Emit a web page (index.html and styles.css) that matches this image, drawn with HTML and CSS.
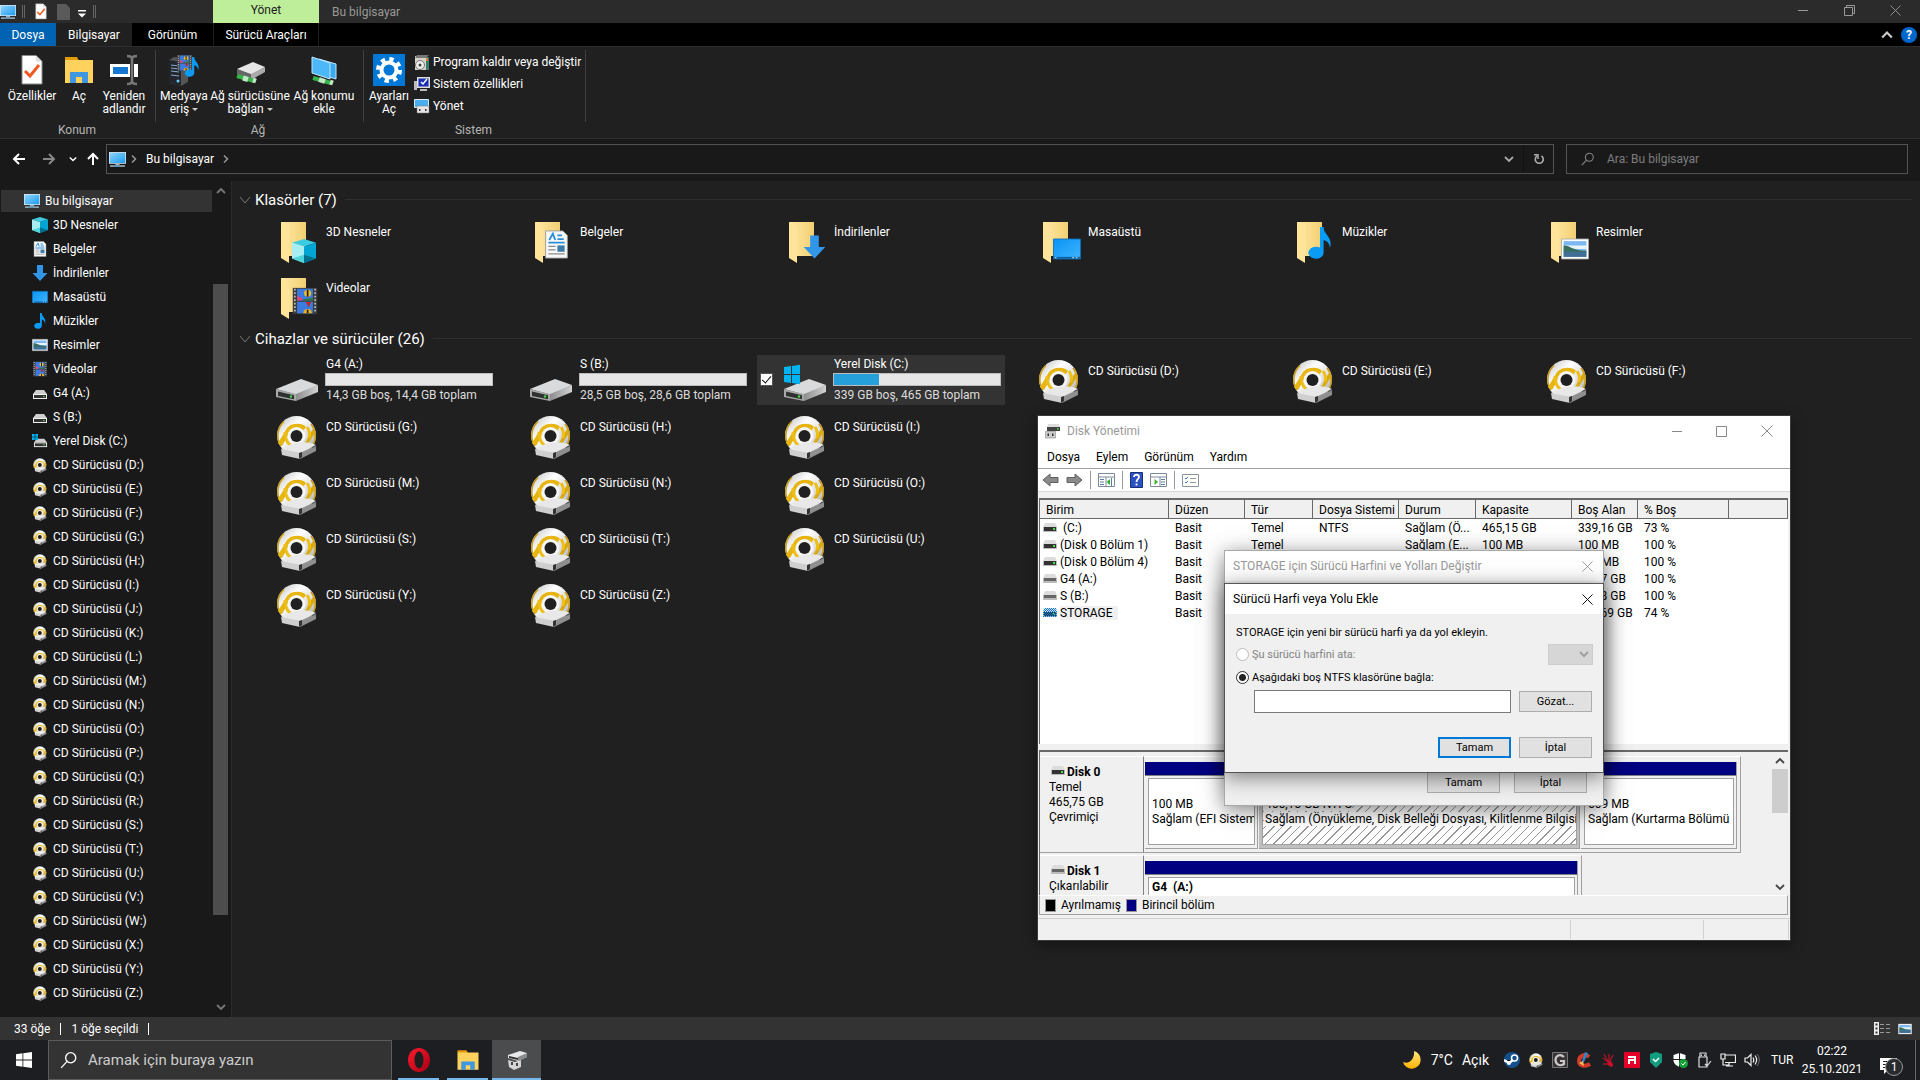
FILE: index.html
```html
<!DOCTYPE html>
<html lang="tr">
<head>
    <meta charset="UTF-8">
    <meta name="viewport" content="width=device-width, initial-scale=1.0">
    <title>Bu bilgisayar</title>
    <link rel="stylesheet" href="styles.css">
</head>
<body>

<!-- Icon set -->
<svg class="sprite" aria-hidden="true">
  <defs>
    <linearGradient id="gScreen" x1="0" y1="0" x2="1" y2="1"><stop offset="0" stop-color="#8fd6ff"/><stop offset="1" stop-color="#1c9bf0"/></linearGradient>
    <linearGradient id="gDesk" x1="0" y1="0" x2="1" y2="1"><stop offset="0" stop-color="#0a94f5"/><stop offset="1" stop-color="#3fb4ff"/></linearGradient>
    <linearGradient id="gFolder" x1="0" y1="0" x2="1" y2="0"><stop offset="0" stop-color="#ffe9a6"/><stop offset="1" stop-color="#f3cf72"/></linearGradient>
    <linearGradient id="gDisc" x1="0" y1="0" x2="1" y2="1"><stop offset="0" stop-color="#b8b8b8"/><stop offset=".35" stop-color="#fff"/><stop offset=".65" stop-color="#ddd"/><stop offset="1" stop-color="#999"/></linearGradient>
    <linearGradient id="gSide" x1="0" y1="0" x2="1" y2="0"><stop offset="0" stop-color="#8d8d8d"/><stop offset="1" stop-color="#d2d2d2"/></linearGradient>
    <linearGradient id="gMoon" x1="0" y1="0" x2="0" y2="1"><stop offset="0" stop-color="#ffe680"/><stop offset="1" stop-color="#ffb000"/></linearGradient>
    <linearGradient id="gOpera" x1="0" y1="0" x2="1" y2="1"><stop offset="0" stop-color="#ff1b2d"/><stop offset="1" stop-color="#a70014"/></linearGradient>
    <pattern id="dots" width="2" height="2" patternUnits="userSpaceOnUse"><path fill="#0078d7" d="M0 0h1v1H0zM1 1h1v1H1z"/></pattern>
  </defs>
  <symbol id="pc" viewBox="0 0 16 16"><path fill="#dfe9f0" d="M0 1h16v11H0z"/><path fill="url(#gScreen)" d="M.7 1.7h14.6v9.6H.7z"/><path fill="#9fb3c0" d="M6 12h4v1.5H6z"/><path fill="#8fa3b0" d="M1 13.3h14v1.7H1z"/><path fill="#3a8fc9" d="M4 13.8h6v.7H4z"/></symbol>
  <symbol id="cube" viewBox="0 0 16 16"><path fill="#3ccbe0" d="M8 0l8 2.500-8 2.500-8-2.500z"/><path fill="#a6eef2" d="M0 2.500l8 2.500v11l-8-3z"/><path fill="#00a5d3" d="M16 2.500L8 5v11l8-3z"/><path fill="#4fd3dd" d="M0 13l8-2.500v5.500z"/><path fill="#00708f" d="M16 13l-8-2.500v5.500z"/></symbol>
  <symbol id="doc" viewBox="0 0 16 16"><path fill="#f8f8f8" stroke="#9a9a9a" stroke-width=".5" d="M2 .5h9.500L14 3v12.500H2z"/><path fill="none" stroke="#2a8fd8" stroke-width="1" d="M4 5.500L6 2l1.300 3.500M8.500 3h2.500M8.500 5H12M3.500 7H12.500"/><path stroke="#8a8a8a" stroke-width=".7" d="M3.500 9h4M3.500 11h4M3.500 13.200h9"/><path fill="#3a7ba8" d="M8.500 8.500h4V12h-4z"/></symbol>
  <symbol id="down" viewBox="0 0 16 16"><path fill="#3096ea" d="M5 0h6v8h4.500L8 16 .5 8H5z"/></symbol>
  <symbol id="desk" viewBox="0 0 16 16"><path fill="url(#gDesk)" stroke="#0b6fbd" stroke-width=".5" d="M.3 2.300h15.400v11.400H.3z"/><path fill="#0a5f9f" d="M.5 12.500h15v1H.5z"/><path stroke="#fff" stroke-width=".5" stroke-dasharray="1" d="M1 13h1M11 13h4"/></symbol>
  <symbol id="note" viewBox="0 0 16 16"><path fill="#0a9bf5" d="M8 0h1.800c0 4 4.700 4.800 3.200 10.500-.3-2.600-1.500-3.500-3.200-4V13A3.800 3 0 1 1 8 10.300z"/></symbol>
  <symbol id="pic" viewBox="0 0 16 16"><path fill="#fff" stroke="#aaa" stroke-width=".5" d="M.3 2.300h15.400v11.400H.3z"/><path fill="#7db9f0" d="M1.500 3.500h13v9h-13z"/><path fill="#e8f3fa" d="M1.500 6h13v2h-13z"/><path fill="#38705c" d="M1.500 6c4 0 5 3 13 3v1h-13z"/><path fill="#3f6f95" d="M1.500 9.500h13v3h-13z"/></symbol>
  <symbol id="film" viewBox="0 0 16 16"><path fill="#3c3c3c" d="M1 .5h14v15H1z"/><path stroke="#bbb" stroke-width="1" stroke-dasharray="1 1" d="M2.200 1v14M13.800 1v14"/><path fill="#3b7be0" d="M3.500 1h9v6.700h-9zM3.500 8.400h9v6.600h-9z"/><circle cx="9.500" cy="3.500" r="2" fill="#f0c020"/><path fill="#f0b020" d="M7 15a2.500 2.500 0 0 1 5 0z"/><path fill="#222" d="M9 1.500h1v4H9zM9 13h1v2H9z"/><path fill="#e0457a" d="M3.500 5l3 1.500v1.200h-3z"/><path fill="#2a7a30" d="M7 7l5.500-.7v1.400H7z"/><path fill="#c22" d="M8.500 8.500h3l-1.500 3z"/></symbol>
  <symbol id="flat" viewBox="0 0 16 16"><path fill="#cfcfcf" d="M4 5h8l3 4H1z"/><path fill="#efefef" d="M1 9h14v5H1z"/><path fill="#333" d="M2 10h12v3H2z"/><path fill="#4be04b" d="M11 11h1.500v1H11z"/></symbol>
  <symbol id="flatwin" viewBox="0 0 16 16"><use href="#flat" x="1" y="1" width="15" height="15"/><path fill="#00b0f0" d="M0 1h2.700v2.700H0zM3.300 1H6v2.700H3.300zM0 4.300h2.700V7H0zM3.300 4.300H6V7H3.300z"/></symbol>
  <symbol id="folder" viewBox="0 0 48 48"><path fill="url(#gFolder)" d="M8 5h25v34H14z"/><path fill="#ffe49a" d="M8 5l8 7v34l-8-5z"/></symbol>
  <symbol id="drive" viewBox="0 0 48 48"><path fill="#d9dadc" d="M3 33l25-10 17 6-20 10z"/><path fill="#a9a9a9" d="M3 33l20 5v7L3 41z"/><path fill="#2f3131" d="M5 35.500l16 3.800v4L5 40z"/><path fill="url(#gSide)" d="M23 38l22-9v7l-22 9z"/><circle cx="18" cy="40.500" r="1.200" fill="#3fe03f"/></symbol>
  <symbol id="drivewin" viewBox="0 0 48 48"><use href="#drive" width="48" height="48"/><path fill="#00b4f1" d="M3 11l7-1v8H3zM11 10l8-1.200V18h-8zM3 19h7v8l-7-1zM11 19h8v9.200L11 27z"/></symbol>
  <symbol id="cd" viewBox="0 0 48 48">
    <circle cx="23.500" cy="23.500" r="19.500" fill="url(#gDisc)"/>
    <path fill="none" stroke="#c79a12" stroke-width="1.500" d="M8 34A18.800 18.800 0 0 1 11 9.500M38 12a18.800 18.800 0 0 1 2 21"/>
    <path fill="#e6b512" d="M5 31l9-15c4-5 15-6 19-1l-3 4c-4-4-10-4-13 1L9 34z"/>
    <path fill="#d9a90f" d="M41 15l-9 16-3 3 4 1 9-14z"/>
    <path fill="none" stroke="#edbf16" stroke-width="3" d="M12 20c0 7 2 11 6 14M34 15c2 3 3 7 2 11"/>
    <circle cx="23.500" cy="24" r="9" fill="#f6f6f6"/><circle cx="23.500" cy="24" r="6" fill="#202020"/>
    <path fill="#e8e8e8" d="M8 37l8-4c8-3 18-4 27 0l-16 8z"/><path fill="#cfcfcf" d="M8 37l19 4v6L9 43z"/><path fill="#8f8f8f" d="M27 41l16-7v5l-16 8z"/><path fill="#333" d="M26 41l3-1v5l-3 2z"/>
  </symbol>
  <symbol id="sheet" viewBox="0 0 24 32"><path fill="#fff" stroke="#8a8a8a" d="M2 1.500h14l6 6V30H2z"/><path fill="#ddd" d="M16 1.500l6 6h-6z"/><path fill="none" stroke="#f15a22" stroke-width="3" d="M5 17l5 5 9-11"/></symbol>
  <symbol id="openfolder" viewBox="0 0 32 32"><path fill="#e59a08" d="M2 3h12l2 4h-14z"/><path fill="#ffd25e" d="M2 6h28v23H2z"/><path fill="#3f97e0" d="M7 29V18h18v11h-6v-6h-6v6z"/></symbol>
  <symbol id="rename" viewBox="0 0 32 32"><path fill="#fff" d="M2 10h28v13H2z"/><path fill="#1677d2" d="M5 13h15v7H5z"/><path fill="#202020" d="M22 8h4v17h-4z"/><path stroke="#777" stroke-width="2.500" fill="none" d="M19 2c3 0 5 1 5 3v22c0 2-2 3-5 3M29 2c-3 0-5 1-5 3M29 30c-3 0-5-1-5-3"/></symbol>
  <symbol id="media" viewBox="0 0 32 32"><path fill="#555" d="M1 6l5-3 14 1v24l-7 4L1 29z"/><path fill="#22262c" d="M1 6l12 2v24L1 29z"/><path stroke="#8ac" d="M3 11l8 1M3 14l8 1M3 17l8 1M3 21l8 1"/><circle cx="10" cy="27" r="1.500" fill="#6cf"/><use href="#film" x="8" y="0" width="17" height="18"/><use href="#note" x="14" y="2" width="20" height="22"/></symbol>
  <symbol id="netdrive" viewBox="0 0 32 32"><path fill="#e6e6e6" d="M3 15l16-7 12 5-14 8z"/><path fill="#666" d="M3 15l14 5v6L3 20z"/><path fill="#aaa" d="M17 20l14-7v5l-14 8z"/><path stroke="#37b34a" stroke-width="4" d="M3 22l17 5"/><path stroke="#bfe8c4" stroke-width="5" d="M9 24l5 1.500M19 26l3 1"/></symbol>
  <symbol id="netloc" viewBox="0 0 32 32"><path fill="#3ba9ee" stroke="#bfe6ff" d="M11 5l17 5v15l-17-5z"/><path fill="#4db8f7" stroke="#bfe6ff" d="M4 3l18 6v16L4 19z"/><path stroke="#37b34a" stroke-width="4" d="M5 24l18 5"/><path stroke="#bfe8c4" stroke-width="5" d="M11 25.500l6 2M22 28l3 1"/></symbol>
  <symbol id="gear" viewBox="0 0 32 32"><path fill="#0078d7" d="M0 0h32v32H0z"/><circle cx="16" cy="16" r="11" fill="none" stroke="#fff" stroke-width="4" stroke-dasharray="4.320"/><circle cx="16" cy="16" r="7.500" fill="none" stroke="#fff" stroke-width="4"/></symbol>
  <symbol id="prog" viewBox="0 0 16 16"><path fill="#d8d3c8" d="M1 2h11v14H1z"/><path fill="#777" d="M3 1h12l-3 3H1z"/><path fill="#3a7d70" d="M12 3h3v13h-3z"/><path fill="#e08030" d="M12 4h2v3h-2z"/><circle cx="6" cy="11" r="4.500" fill="#eee" stroke="#777"/><circle cx="6" cy="11" r="1.500" fill="#444"/></symbol>
  <symbol id="sysprop" viewBox="0 0 16 16"><path fill="#ddd" d="M3 1h13v11H3z"/><path fill="#1a2fb5" d="M4.500 2.500h10v8h-10z"/><path fill="none" stroke="#fff" stroke-width="1.500" d="M7 6l2 2 4-5"/><path fill="#bbb" d="M0 5h3v9H0zM6 13h7v2H6z"/></symbol>
  <symbol id="manage" viewBox="0 0 16 16"><path fill="#49aef0" stroke="#d8edf9" d="M.5 1.500h14v8H.5z"/><path fill="#e6e6e6" stroke="#777" stroke-width=".5" d="M3 8h12v7H3z"/><path fill="#333" d="M5 11h1.500v2H5zM11 11h1.500v2H11z"/></symbol>
  <symbol id="diskman" viewBox="0 0 16 16"><path fill="#ddd" d="M3 1h11l1 3H2z"/><path fill="#444" d="M2 4h13v4H2z"/><path fill="#3fe03f" d="M12 5h1.500v1.500H12z"/><path fill="#ccc" stroke="#888" stroke-width=".6" d="M.5 8.500h10v6.500H.5z"/><path fill="#333" d="M2.500 10.500H4v2.500H2.500zM7 10.500h1.500v2.500H7z"/></symbol>
  <symbol id="vol" viewBox="0 0 14 10"><path fill="#dcdcdc" d="M2 0h10l2 4H0z"/><path fill="#bbb" d="M0 4h14v5H0z"/><path fill="#333" d="M1 4h12v4H1z"/><path fill="#3fe03f" d="M10 5h2v2h-2z"/></symbol>
  <symbol id="volr" viewBox="0 0 14 10"><path fill="#dcdcdc" d="M2 0h10l2 4H0z"/><path fill="#bbb" d="M0 4h14v5H0z"/><path fill="#666" d="M1 4h12v3H1z"/></symbol>
  <symbol id="search" viewBox="0 0 16 16"><circle cx="9.500" cy="6" r="4.500" fill="none" stroke="currentColor" stroke-width="1.200"/><path stroke="currentColor" stroke-width="1.200" d="M6.300 9.200L1 15"/></symbol>
  <symbol id="chev" viewBox="0 0 10 10"><path fill="none" stroke="currentColor" stroke-width="1.800" d="M1 3l4 4 4-4"/></symbol>
  <symbol id="chevup" viewBox="0 0 10 10"><path fill="none" stroke="currentColor" stroke-width="1.800" d="M1 7l4-4 4 4"/></symbol>
  <symbol id="chevr" viewBox="0 0 10 10"><path fill="none" stroke="currentColor" stroke-width="1.500" d="M3 1.500L6.500 5 3 8.500"/></symbol>
  <symbol id="cross" viewBox="0 0 12 12"><path stroke="currentColor" d="M.5 .5l11 11M11.500 .5l-11 11"/></symbol>
  <symbol id="minus" viewBox="0 0 12 12"><path stroke="currentColor" d="M1 6.500h10"/></symbol>
</svg>

<header class="titlebar">
  <div class="quick">
    <svg width="16" height="16"><use href="#pc"/></svg>
    <i class="bar"></i>
    <svg class="q1" width="14" height="17"><use href="#sheet"/></svg>
    <svg class="q2" width="13" height="16" viewBox="0 0 13 16"><path fill="#5a5a5a" d="M0 0h9l4 4v12H0z"/></svg>
    <svg class="q3" width="8" height="8" viewBox="0 0 8 8"><path fill="#fff" d="M0 0h8v1.500H0zM0 3.500h8l-4 4z"/></svg>
    <i class="bar"></i>
  </div>
  <div class="context">Yönet</div>
  <div class="title">Bu bilgisayar</div>
  <div class="winbtns">
    <button aria-label="Simge durumuna küçült"><svg width="12" height="12"><use href="#minus"/></svg></button>
    <button aria-label="Geri yükle"><svg width="11" height="11" viewBox="0 0 11 11"><path fill="none" stroke="currentColor" d="M.5 2.500h8v8h-8zM2.500 2.500v-2h8v8h-2"/></svg></button>
    <button aria-label="Kapat"><svg width="11" height="11"><use href="#cross"/></svg></button>
  </div>
</header>

<nav class="tabs">
  <a href="#" class="file">Dosya</a>
  <a href="#" class="active">Bilgisayar</a>
  <a href="#" class="view">Görünüm</a>
  <a href="#" class="tools">Sürücü Araçları</a>
  <div class="tabs-right">
    <svg width="12" height="12"><use href="#chevup"/></svg>
    <span class="help">?</span>
  </div>
</nav>

<section class="ribbon">
  <div class="group">
    <div class="items">
      <button class="w56"><svg width="24" height="32"><use href="#sheet"/></svg>Özellikler</button>
      <button class="w38"><svg width="32" height="32"><use href="#openfolder"/></svg>Aç</button>
      <button class="w52"><svg width="32" height="32"><use href="#rename"/></svg>Yeniden<br>adlandır</button>
    </div>
    <div class="caption">Konum</div>
  </div>
  <div class="group net">
    <div class="items">
      <button class="w52"><svg width="32" height="32"><use href="#media"/></svg>Medyaya<span>eriş <i class="caret"></i></span></button>
      <button class="w80"><svg width="32" height="32"><use href="#netdrive"/></svg>Ağ sürücüsüne<span>bağlan <i class="caret"></i></span></button>
      <button class="w68"><svg width="32" height="32"><use href="#netloc"/></svg>Ağ konumu<br>ekle</button>
    </div>
    <div class="caption">Ağ</div>
  </div>
  <div class="group sys">
    <div class="items">
      <button class="w44"><svg width="32" height="32"><use href="#gear"/></svg>Ayarları<br>Aç</button>
      <div class="stack">
        <button><svg width="16" height="16"><use href="#prog"/></svg>Program kaldır veya değiştir</button>
        <button><svg width="16" height="16"><use href="#sysprop"/></svg>Sistem özellikleri</button>
        <button><svg width="16" height="16"><use href="#manage"/></svg>Yönet</button>
      </div>
    </div>
    <div class="caption">Sistem</div>
  </div>
</section>

<div class="addressrow">
  <div class="arrows">
    <button aria-label="Geri"><svg width="14" height="12" viewBox="0 0 14 12"><path fill="none" stroke="currentColor" stroke-width="2" d="M13 6H2M7 1L2 6l5 5"/></svg></button>
    <button aria-label="İleri" class="dim"><svg width="14" height="12" viewBox="0 0 14 12"><path fill="none" stroke="currentColor" stroke-width="2" d="M1 6h11M7 1l5 5-5 5"/></svg></button>
    <button aria-label="Son konumlar" class="small"><svg width="8" height="8"><use href="#chev"/></svg></button>
    <button aria-label="Yukarı" class="up"><svg width="12" height="14" viewBox="0 0 12 14"><path fill="none" stroke="currentColor" stroke-width="2" d="M6 13V2M1 7l5-5 5 5"/></svg></button>
  </div>
  <div class="address">
    <svg width="17" height="17"><use href="#pc"/></svg>
    <svg class="sep" width="10" height="10"><use href="#chevr"/></svg>
    <a href="#">Bu bilgisayar</a>
    <svg class="sep" width="10" height="10"><use href="#chevr"/></svg>
    <button class="drop" aria-label="Önceki konumlar"><svg width="10" height="10"><use href="#chev"/></svg></button>
    <button class="refresh" aria-label="Yenile"><svg width="12" height="12" viewBox="0 0 12 12"><path fill="none" stroke="currentColor" stroke-width="1.600" d="M4 3a4 4 0 1 0 4.500 0"/><path fill="none" stroke="currentColor" stroke-width="1.500" d="M1 1.700h4V6"/></svg></button>
  </div>
  <label class="find">
    <svg width="14" height="14"><use href="#search"/></svg>
    <input type="text" placeholder="Ara: Bu bilgisayar" aria-label="Ara">
  </label>
</div>

<main class="body">
  <aside class="tree">
    <ul>
      <li class="root"><a href="#"><svg><use href="#pc"/></svg>Bu bilgisayar</a></li>
      <li><a href="#"><svg><use href="#cube"/></svg>3D Nesneler</a></li>
      <li><a href="#"><svg><use href="#doc"/></svg>Belgeler</a></li>
      <li><a href="#"><svg><use href="#down"/></svg>İndirilenler</a></li>
      <li><a href="#"><svg><use href="#desk"/></svg>Masaüstü</a></li>
      <li><a href="#"><svg><use href="#note"/></svg>Müzikler</a></li>
      <li><a href="#"><svg><use href="#pic"/></svg>Resimler</a></li>
      <li><a href="#"><svg><use href="#film"/></svg>Videolar</a></li>
      <li><a href="#"><svg><use href="#flat"/></svg>G4 (A:)</a></li>
      <li><a href="#"><svg><use href="#flat"/></svg>S (B:)</a></li>
      <li><a href="#"><svg><use href="#flatwin"/></svg>Yerel Disk (C:)</a></li>
      <li><a href="#"><svg><use href="#cd"/></svg>CD Sürücüsü (D:)</a></li>
      <li><a href="#"><svg><use href="#cd"/></svg>CD Sürücüsü (E:)</a></li>
      <li><a href="#"><svg><use href="#cd"/></svg>CD Sürücüsü (F:)</a></li>
      <li><a href="#"><svg><use href="#cd"/></svg>CD Sürücüsü (G:)</a></li>
      <li><a href="#"><svg><use href="#cd"/></svg>CD Sürücüsü (H:)</a></li>
      <li><a href="#"><svg><use href="#cd"/></svg>CD Sürücüsü (I:)</a></li>
      <li><a href="#"><svg><use href="#cd"/></svg>CD Sürücüsü (J:)</a></li>
      <li><a href="#"><svg><use href="#cd"/></svg>CD Sürücüsü (K:)</a></li>
      <li><a href="#"><svg><use href="#cd"/></svg>CD Sürücüsü (L:)</a></li>
      <li><a href="#"><svg><use href="#cd"/></svg>CD Sürücüsü (M:)</a></li>
      <li><a href="#"><svg><use href="#cd"/></svg>CD Sürücüsü (N:)</a></li>
      <li><a href="#"><svg><use href="#cd"/></svg>CD Sürücüsü (O:)</a></li>
      <li><a href="#"><svg><use href="#cd"/></svg>CD Sürücüsü (P:)</a></li>
      <li><a href="#"><svg><use href="#cd"/></svg>CD Sürücüsü (Q:)</a></li>
      <li><a href="#"><svg><use href="#cd"/></svg>CD Sürücüsü (R:)</a></li>
      <li><a href="#"><svg><use href="#cd"/></svg>CD Sürücüsü (S:)</a></li>
      <li><a href="#"><svg><use href="#cd"/></svg>CD Sürücüsü (T:)</a></li>
      <li><a href="#"><svg><use href="#cd"/></svg>CD Sürücüsü (U:)</a></li>
      <li><a href="#"><svg><use href="#cd"/></svg>CD Sürücüsü (V:)</a></li>
      <li><a href="#"><svg><use href="#cd"/></svg>CD Sürücüsü (W:)</a></li>
      <li><a href="#"><svg><use href="#cd"/></svg>CD Sürücüsü (X:)</a></li>
      <li><a href="#"><svg><use href="#cd"/></svg>CD Sürücüsü (Y:)</a></li>
      <li><a href="#"><svg><use href="#cd"/></svg>CD Sürücüsü (Z:)</a></li>
    </ul>
    <div class="scroll">
      <svg width="10" height="10"><use href="#chevup"/></svg>
      <div class="track"><div class="thumb"></div></div>
      <svg width="10" height="10"><use href="#chev"/></svg>
    </div>
  </aside>

  <section class="files">
    <h2><svg width="12" height="12" viewBox="0 0 12 12"><path fill="none" stroke="#777" d="M1 3l5 6 5-6"/></svg>Klasörler (7)</h2>
    <div class="grid">
      <div class="tile"><svg><use href="#folder"/><use href="#cube" x="19" y="22" width="24" height="24"/></svg><p>3D Nesneler</p></div>
      <div class="tile"><svg><use href="#folder"/><use href="#doc" x="15" y="13" width="29" height="29"/></svg><p>Belgeler</p></div>
      <div class="tile"><svg><use href="#folder"/><use href="#down" x="22" y="18" width="23" height="24"/></svg><p>İndirilenler</p></div>
      <div class="tile"><svg><use href="#folder"/><use href="#desk" x="18" y="18" width="28" height="28"/></svg><p>Masaüstü</p></div>
      <div class="tile"><svg><use href="#folder"/><use href="#note" x="15" y="10" width="32" height="32"/></svg><p>Müzikler</p></div>
      <div class="tile"><svg><use href="#folder"/><use href="#pic" x="18" y="18" width="28" height="28"/></svg><p>Resimler</p></div>
      <div class="tile"><svg><use href="#folder"/><use href="#film" x="17" y="14" width="30" height="28"/></svg><p>Videolar</p></div>
    </div>
    <h2><svg width="12" height="12" viewBox="0 0 12 12"><path fill="none" stroke="#777" d="M1 3l5 6 5-6"/></svg>Cihazlar ve sürücüler (26)</h2>
    <div class="grid">
      <div class="tile disk"><svg><use href="#drive"/></svg><div><p>G4 (A:)</p><div class="usage"><span style="width:0%"></span></div><small>14,3 GB boş, 14,4 GB toplam</small></div></div>
      <div class="tile disk"><svg><use href="#drive"/></svg><div><p>S (B:)</p><div class="usage"><span style="width:0%"></span></div><small>28,5 GB boş, 28,6 GB toplam</small></div></div>
      <div class="tile disk selected"><input type="checkbox" checked aria-label="Yerel Disk (C:)"><svg><use href="#drivewin"/></svg><div><p>Yerel Disk (C:)</p><div class="usage"><span style="width:27%"></span></div><small>339 GB boş, 465 GB toplam</small></div></div>
      <div class="tile"><svg><use href="#cd"/></svg><p>CD Sürücüsü (D:)</p></div>
      <div class="tile"><svg><use href="#cd"/></svg><p>CD Sürücüsü (E:)</p></div>
      <div class="tile"><svg><use href="#cd"/></svg><p>CD Sürücüsü (F:)</p></div>
      <div class="tile"><svg><use href="#cd"/></svg><p>CD Sürücüsü (G:)</p></div>
      <div class="tile"><svg><use href="#cd"/></svg><p>CD Sürücüsü (H:)</p></div>
      <div class="tile"><svg><use href="#cd"/></svg><p>CD Sürücüsü (I:)</p></div>
      <div class="tile"></div>
      <div class="tile"></div>
      <div class="tile"></div>
      <div class="tile"><svg><use href="#cd"/></svg><p>CD Sürücüsü (M:)</p></div>
      <div class="tile"><svg><use href="#cd"/></svg><p>CD Sürücüsü (N:)</p></div>
      <div class="tile"><svg><use href="#cd"/></svg><p>CD Sürücüsü (O:)</p></div>
      <div class="tile"></div>
      <div class="tile"></div>
      <div class="tile"></div>
      <div class="tile"><svg><use href="#cd"/></svg><p>CD Sürücüsü (S:)</p></div>
      <div class="tile"><svg><use href="#cd"/></svg><p>CD Sürücüsü (T:)</p></div>
      <div class="tile"><svg><use href="#cd"/></svg><p>CD Sürücüsü (U:)</p></div>
      <div class="tile"></div>
      <div class="tile"></div>
      <div class="tile"></div>
      <div class="tile"><svg><use href="#cd"/></svg><p>CD Sürücüsü (Y:)</p></div>
      <div class="tile"><svg><use href="#cd"/></svg><p>CD Sürücüsü (Z:)</p></div>
    </div>
  </section>
</main>

<footer class="status">
  <span>33 öğe</span>
  <span>1 öğe seçildi</span>
  <div class="views">
    <svg width="16" height="13" viewBox="0 0 16 13"><path fill="#eee" d="M0 0h5v13H0z"/><path fill="#333" d="M1.500 1.500h2v2h-2zM1.500 5.500h2v2h-2zM1.500 9.500h2v2h-2z"/><path stroke="#999" d="M6 2.500h4M12 2.500h4M6 6.500h4M12 6.500h4M6 10.500h4M12 10.500h4"/></svg>
    <svg width="14" height="14"><use href="#pic"/></svg>
  </div>
</footer>

<div class="taskbar">
  <button class="start" aria-label="Başlat"><svg width="16" height="16" viewBox="0 0 16 16"><path fill="#fff" d="M0 2.300L6.500 1.300v6.200H0zM7.300 1.200L16 0v7.500H7.300zM0 8.400h6.500v6.300L0 13.700zM7.300 8.400H16V16l-8.700-1.200z"/></svg></button>
  <label class="tasksearch"><svg width="18" height="18"><use href="#search"/></svg><input type="text" placeholder="Aramak için buraya yazın" aria-label="Ara"></label>
  <div class="apps">
    <button aria-label="Opera"><svg width="24" height="24" viewBox="0 0 24 24"><ellipse cx="12" cy="12" rx="11" ry="12" fill="url(#gOpera)"/><ellipse cx="12" cy="12" rx="4.500" ry="8.500" fill="#1d1e20"/></svg></button>
    <button aria-label="Dosya Gezgini"><svg width="24" height="24"><use href="#openfolder"/></svg></button>
    <button class="on" aria-label="Disk Yönetimi"><svg width="24" height="24" viewBox="0 0 24 24"><path fill="#e8e8e8" d="M3 7l12-4 7 2v4l-9 4-10-3z"/><path fill="#8a8a8a" d="M13 9l9-4v4l-9 4z"/><path fill="#333" d="M4 8l9 2v2L4 10z"/><path fill="#d4d4d4" d="M3 12l7 2 6-2v7l-7 3-5-3z"/><path fill="#444" d="M6 14h2v3H6zM11 15h2v3h-2z"/></svg></button>
  </div>
  <div class="weather"><svg width="20" height="20" viewBox="0 0 20 20"><path fill="url(#gMoon)" d="M12 1a9 9 0 1 1-11 11c6 3 12-3 11-11z"/></svg><span>7°C</span><span>Açık</span></div>
  <div class="tray">
    <svg viewBox="0 0 16 16"><circle cx="8" cy="8" r="8" fill="#14518c"/><circle cx="10.500" cy="6" r="3" fill="none" stroke="#fff" stroke-width="1.500"/><path stroke="#fff" stroke-width="2.500" d="M0 8l5 3 4-3"/><circle cx="5" cy="11" r="2" fill="#fff"/></svg>
    <svg><use href="#cd"/></svg>
    <svg viewBox="0 0 16 16"><path fill="#3b3335" stroke="#777" d="M.5 .5h15v15H.5z"/><path fill="none" stroke="#c8c8c8" stroke-width="2.200" d="M12 5C8 1 3.500 4 3.500 8s4 7 8.500 4V9H8"/></svg>
    <svg viewBox="0 0 16 16"><path fill="none" stroke="#d33a28" stroke-width="4" d="M13 5C9 1 3 4 3 9s6 6 11 3"/><path fill="#2f86c8" d="M9 0l3 1-4 9-3 2z"/><path fill="#f0c060" d="M3 11l4-2 1 5z"/></svg>
    <svg viewBox="0 0 16 16"><path stroke="#b01226" stroke-width="1.300" fill="none" d="M8 9L4 2M9 8V2M10 9l3-6M8 10L3 6M8 12l-5 0"/><path fill="#c8102e" d="M7 8l4 1 1 2c2 1 1 4-1 4l-3-2z"/></svg>
    <svg viewBox="0 0 16 16"><path fill="#e4002b" d="M0 0h16v16H0z"/><path fill="none" stroke="#fff" stroke-width="2" d="M4 5h7v7M5 12V8h5"/></svg>
    <svg viewBox="0 0 16 16"><path fill="#139d7f" d="M8 0l6 2v8l-6 6-6-6V2z"/><path fill="none" stroke="#fff" stroke-width="1.500" d="M5 7l2.500 2.500L11 6"/></svg>
    <svg viewBox="0 0 16 16"><path fill="#fff" d="M7.500 1l6 2v5c0 4-3 5.500-6 7-3-1.500-6-3-6-7V3z"/><path stroke="#1d1e20" d="M7.500 1v14M1 7.500h13"/><circle cx="11.500" cy="11.500" r="4.500" fill="#16a03a"/><path fill="none" stroke="#fff" d="M9.500 11.500l1.500 1.500 2.500-3"/></svg>
    <svg viewBox="0 0 16 16"><path fill="none" stroke="#ddd" stroke-width="1.200" d="M4 5V1h6v4M3 5h8v10H3zM9 12l2 2 4-5"/><path fill="#ddd" d="M5 2.500h1V4H5zM8 2.500h1V4H8z"/></svg>
    <svg viewBox="0 0 16 16"><path fill="none" stroke="#eee" stroke-width="1.200" d="M5 3h10.500v7.500H5M1 2h4v5H1zM3 7v6h6M9 10.500V14M6 14h7"/></svg>
    <svg viewBox="0 0 16 16"><path fill="none" stroke="#eee" stroke-width="1.200" d="M1 6h2.500L7 2.500v11L3.500 10H1zM9 5.500c1 1.500 1 3.500 0 5M11 3.500c2 2.500 2 6 0 9"/><path fill="none" stroke="#777" d="M13 2c3 3.500 3 8 0 12"/></svg>
  </div>
  <span class="lang">TUR</span>
  <time class="clock">02:22<br>25.10.2021</time>
  <button class="notify" aria-label="Bildirimler"><svg width="20" height="18" viewBox="0 0 20 18"><path fill="#fff" d="M1 1h17v12h-9l-4 4v-4H1z"/><path stroke="#222" d="M4 4.500h11M4 7.500h11M4 10.500h7"/></svg><span class="badge">1</span></button>
</div>

<!-- Disk Management -->
<section class="window diskmgmt">
  <header>
    <svg width="16" height="16"><use href="#diskman"/></svg><h3>Disk Yönetimi</h3>
    <button aria-label="Küçült"><svg width="12" height="12"><use href="#minus"/></svg></button>
    <button aria-label="Ekranı kapla"><svg width="11" height="11" viewBox="0 0 11 11"><path fill="none" stroke="currentColor" d="M.5 .5h10v10H.5z"/></svg></button>
    <button aria-label="Kapat"><svg width="12" height="12"><use href="#cross"/></svg></button>
  </header>
  <nav class="menu"><a href="#">Dosya</a><a href="#">Eylem</a><a href="#">Görünüm</a><a href="#">Yardım</a></nav>
  <div class="toolbar">
    <button aria-label="Geri"><svg width="17" height="14" viewBox="0 0 17 14"><path fill="#8a8a8a" stroke="#5f5f5f" d="M1 7l7-6v3.500h8v5H8V13z"/></svg></button>
    <button aria-label="İleri"><svg width="17" height="14" viewBox="0 0 17 14"><path fill="#8a8a8a" stroke="#5f5f5f" d="M16 7L9 1v3.500H1v5h8V13z"/></svg></button>
    <i></i>
    <button aria-label="Ağacı göster"><svg width="17" height="14" viewBox="0 0 17 14"><path fill="#fff" stroke="#7d8b99" d="M.5 .5h16v13H.5zM.5 4h16M8 4v9.500"/><path stroke="#5b7fa8" d="M2 6.500h4M2 9h4M2 11.500h4M13.500 5v8"/><path fill="#3fae29" d="M12 6v6L8.500 9z"/></svg></button>
    <i></i>
    <button aria-label="Yardım"><svg width="13" height="16" viewBox="0 0 13 16"><path fill="#2b50c0" stroke="#16307e" d="M.5 .5h12v15H.5z"/><path fill="none" stroke="#fff" stroke-width="1.800" d="M4 5c0-3 5-3 5 0 0 2-2.500 2-2.500 5M6.500 11.500v2"/></svg></button>
    <button aria-label="Eylem bölmesi"><svg width="17" height="14" viewBox="0 0 17 14"><path fill="#fff" stroke="#7d8b99" d="M.5 .5h16v13H.5zM.5 4h16M10 4v9.500"/><path stroke="#5b7fa8" d="M11 6.500h4M11 9h4M11 11.500h4"/><path fill="#3fae29" d="M4.500 6v6L8 9z"/></svg></button>
    <i></i>
    <button aria-label="Ayarlar"><svg width="17" height="13" viewBox="0 0 17 13"><path fill="#fff" stroke="#8a949e" d="M.5 .5h16v12H.5z"/><path fill="none" stroke="#3a7fd0" d="M3 4l1 1 2-2M3 8l1 1 2-2"/><path stroke="#999" d="M8 4.500h6M8 8.500h6"/></svg></button>
  </div>
  <div class="volumes">
    <table>
      <colgroup><col class="c1"><col class="c2"><col class="c3"><col class="c4"><col class="c5"><col class="c6"><col class="c7"><col class="c8"><col></colgroup>
      <thead><tr><th>Birim</th><th>Düzen</th><th>Tür</th><th>Dosya Sistemi</th><th>Durum</th><th>Kapasite</th><th>Boş Alan</th><th>% Boş</th><th></th></tr></thead>
      <tbody>
        <tr><td><svg><use href="#vol"/></svg>&nbsp;(C:)</td><td>Basit</td><td>Temel</td><td>NTFS</td><td>Sağlam (Ö...</td><td>465,15 GB</td><td>339,16 GB</td><td>73 %</td><td></td></tr>
        <tr><td><svg><use href="#vol"/></svg>(Disk 0 Bölüm 1)</td><td>Basit</td><td>Temel</td><td></td><td>Sağlam (E...</td><td>100 MB</td><td>100 MB</td><td>100 %</td><td></td></tr>
        <tr><td><svg><use href="#vol"/></svg>(Disk 0 Bölüm 4)</td><td>Basit</td><td></td><td></td><td></td><td></td><td>509 MB</td><td>100 %</td><td></td></tr>
        <tr><td><svg><use href="#volr"/></svg>G4 (A:)</td><td>Basit</td><td></td><td></td><td></td><td></td><td>14,37 GB</td><td>100 %</td><td></td></tr>
        <tr><td><svg><use href="#volr"/></svg>S (B:)</td><td>Basit</td><td></td><td></td><td></td><td></td><td>28,58 GB</td><td>100 %</td><td></td></tr>
        <tr><td><svg class="sel" viewBox="0 0 14 10"><use href="#vol"/><path fill="url(#dots)" d="M1 0h12l1 4v5H0V4z"/></svg><span class="picked">STORAGE</span></td><td>Basit</td><td></td><td></td><td></td><td></td><td>689,69 GB</td><td>74 %</td><td></td></tr>
      </tbody>
    </table>
  </div>
  <div class="graph">
    <div class="disks">
      <div class="disk-row">
        <div class="disk-info"><b><svg><use href="#vol"/></svg>Disk 0</b>Temel<br>465,75 GB<br>Çevrimiçi</div>
        <div class="parts three">
          <div class="part"><div class="stripe"></div><p>100 MB<br>Sağlam (EFI Sistem</p></div>
          <div class="part hatch"><div class="stripe"></div><p><span>465,15 GB NTFS</span><br><span>Sağlam (Önyükleme, Disk Belleği Dosyası, Kilitlenme Bilgisi</span></p></div>
          <div class="part"><div class="stripe"></div><p>509 MB<br>Sağlam (Kurtarma Bölümü</p></div>
        </div>
      </div>
      <div class="disk-row">
        <div class="disk-info"><b><svg><use href="#volr"/></svg>Disk 1</b>Çıkarılabilir</div>
        <div class="parts one">
          <div class="part"><div class="stripe"></div><p><b>G4&nbsp; (A:)</b></p></div>
        </div>
      </div>
    </div>
    <div class="vscroll">
      <svg width="10" height="10"><use href="#chevup"/></svg>
      <div class="thumb"></div>
      <svg width="10" height="10"><use href="#chev"/></svg>
    </div>
  </div>
  <div class="legend"><i class="black"></i>Ayrılmamış<i class="navy"></i>Birincil bölüm</div>
  <div class="wstatus"><span></span><span></span><span></span></div>
</section>

<section class="window dialog back">
  <header><h3>STORAGE için Sürücü Harfini ve Yolları Değiştir</h3><button aria-label="Kapat"><svg width="11" height="11"><use href="#cross"/></svg></button></header>
  <div class="buttons"><button>Tamam</button><button>İptal</button></div>
</section>

<section class="window dialog front">
  <header><h3>Sürücü Harfi veya Yolu Ekle</h3><button aria-label="Kapat"><svg width="11" height="11"><use href="#cross"/></svg></button></header>
  <form>
    <p>STORAGE için yeni bir sürücü harfi ya da yol ekleyin.</p>
    <div class="line letter"><input type="radio" id="assign" name="mode" disabled><label for="assign">Şu sürücü harfini ata:</label><select disabled aria-label="Sürücü harfi"></select></div>
    <div class="line"><input type="radio" id="mount" name="mode" checked><label for="mount">Aşağıdaki boş NTFS klasörüne bağla:</label></div>
    <div class="line path"><input type="text" aria-label="NTFS klasörü"><button type="button">Gözat...</button></div>
    <div class="buttons"><button type="button" class="default">Tamam</button><button type="button">İptal</button></div>
  </form>
</section>

</body>
</html>
```

FILE: styles.css
```css
* { box-sizing: border-box; }
body {
    margin: 0;
    height: 100vh;
    display: flex;
    flex-direction: column;
    overflow: hidden;
    background: #202020;
    color: #fff;
    font-family: Roboto, "Open Sans", sans-serif;
    font-size: 12px;
    line-height: 15px;
}
a { color: inherit; text-decoration: none; }
button {
    font: inherit;
    color: inherit;
    background: none;
    border: 0;
    padding: 0;
}
input { font: inherit; color: inherit; }
h2, h3, p, ul { margin: 0; padding: 0; font-weight: normal; font-size: inherit; }
svg { flex: none; display: block; }
.sprite { position: absolute; width: 0; height: 0; }

/* title bar */
.titlebar {
    display: flex;
    height: 23px;
    background: #2b2b2b;
    flex: none;
}
.quick { display: flex; align-items: center; width: 213px; }
.bar { width: 3px; height: 13px; border: 1px solid #666; border-width: 0 1px; margin-left: 6px; }
.q1 { margin-left: 9px; }
.q2 { margin-left: 9px; }
.q3 { margin: 4px 1px 0 8px; }
.context {
    width: 106px;
    background: #bfee9a;
    color: #222;
    text-align: center;
    line-height: 20px;
}
.title { padding-left: 13px; color: #999; line-height: 24px; }
.winbtns { margin-left: auto; display: flex; color: #999; padding-right: 2px; }
.winbtns button { width: 46px; height: 20px; display: flex; align-items: center; justify-content: center; }

.tabs { display: flex; height: 23px; background: #000; flex: none; line-height: 24px; text-align: center; }
.tabs a { display: block; }
.file { width: 56px; background: #0063b1; }
.active { width: 76px; background: #202020; }
.view { width: 81px; }
.tools { width: 106px; border: 1px solid #1c1c1c; border-width: 0 1px; }
.tabs-right { margin-left: auto; display: flex; align-items: center; gap: 8px; padding-right: 3px; color: #ccc; }
.help { width: 16px; height: 16px; border-radius: 8px; background: #0067cc; color: #fff; font-weight: bold; line-height: 16px; }

/* ribbon */
.ribbon { display: flex; height: 93px; padding-top: 3px; border: 1px solid #2d2d2d; border-width: 1px 0; flex: none; }
.group { width: 156px; padding-left: 4px; position: relative; }
.group::after { content: ""; position: absolute; right: 0; top: 0; width: 1px; height: 72px; background: #3f3f3f; }
.group.net { width: 208px; padding-left: 2px; }
.group.sys { width: 222px; padding-left: 3px; }
.items { display: flex; height: 73px; }
.items > button { display: flex; flex-direction: column; align-items: center; white-space: nowrap; padding-top: 4px; align-self: flex-start; line-height: 13px; }
.items > button svg { margin-bottom: 4px; }
.w38 { width: 38px; } .w44 { width: 44px; } .w52 { width: 52px; }
.w56 { width: 56px; } .w68 { width: 68px; } .w80 { width: 80px; }
.caret { display: inline-block; border: 3px solid transparent; border-top-color: #ccc; border-bottom: 0; vertical-align: middle; }
.stack { padding: 1px 0 0 3px; }
.stack button { display: flex; align-items: center; gap: 3px; height: 22px; white-space: nowrap; }
.caption { text-align: center; color: #b5b5b5; padding-right: 6px; }

/* address row */
.addressrow { display: flex; align-items: center; height: 42px; background: #191919; padding: 0 12px 2px 0; flex: none; }
.arrows { display: flex; align-items: center; width: 106px; padding-left: 12px; }
.arrows .dim { color: #888; margin-left: 16px; }
.arrows .small { margin-left: 13px; }
.arrows .up { margin-left: 10px; }
.address { flex: 1; display: flex; align-items: center; height: 30px; border: 1px solid #535353; padding-left: 2px; }
.address a { margin: 0 4px 0 7px; }
.sep { color: #999; margin-left: 3px; }
.drop { margin-left: auto; width: 28px; color: #aaa; display: flex; justify-content: center; }
.refresh { width: 30px; height: 28px; border-left: 1px solid #111; color: #aaa; display: flex; align-items: center; justify-content: center; }
.find { width: 342px; height: 30px; margin-left: 12px; border: 1px solid #535353; display: flex; align-items: center; padding-left: 14px; color: #888; }
.find input, .tasksearch input { flex: 1; background: none; border: 0; outline: 0; padding: 0; margin-left: 12px; }
.find input::placeholder { color: #7d7d7d; }

/* explorer body */
.body { flex: 1; display: flex; min-height: 0; }
.tree { width: 232px; display: flex; background: #191919; border-right: 1px solid #2b2b2b; padding: 0 2px 0 1px; }
.tree ul { flex: 1; list-style: none; padding-top: 8px; }
.tree li a { display: flex; align-items: center; height: 24px; padding-left: 31px; gap: 5px; white-space: nowrap; }
.tree li svg { width: 16px; height: 16px; }
.tree li.root a { padding-left: 23px; height: 22px; margin: 1px 0; background: #333; }
.scroll { width: 17px; padding: 5px 0; display: flex; flex-direction: column; align-items: center; color: #777; }
.track { flex: 1; width: 15px; padding-top: 88px; }
.scroll .thumb { height: 631px; background: #4d4d4d; }

.files { flex: 1; padding: 0 8px 0 17px; }
.files h2 { display: flex; align-items: center; height: 35px; font-size: 15px; line-height: 20px; margin-left: -10px; gap: 4px; padding-top: 2px; }
.files h2::after { content: ""; flex: 1; height: 1px; background: #2f2f2f; margin-left: 4px; }
.grid { display: grid; grid-template-columns: repeat(auto-fill, 248px); gap: 6px; }
.files h2:not(:first-child) { height: 33px; padding-top: 0; }
.tile { display: flex; height: 50px; padding: 1px 0 0 24px; position: relative; }
.tile > svg { width: 48px; height: 48px; }
.tile p { margin: 8px 0 0 5px; }
.disk p { margin: 1px 0 1px 1px; }
.tile.disk > div { padding-left: 4px; }
.usage { width: 168px; height: 13px; background: #e6e6e6; border: 1px solid #bcbcbc; margin-bottom: 2px; }
.usage span { display: block; height: 11px; background: #26a0da; }
.tile small { font-size: 12px; color: #ddd; margin-left: 1px; }
.selected { background: #333; }
.tile input { position: absolute; left: 3px; top: 18px; width: 13px; height: 13px; margin: 0; appearance: none; background: #fff; border: 1px solid #555; }
.tile input:checked::after { content: ""; position: absolute; left: 3px; top: 0; width: 4px; height: 8px; border: solid #111; border-width: 0 1px 1px 0; transform: rotate(40deg); }

.status { display: flex; align-items: center; height: 23px; background: #333; flex: none; padding: 0 8px 0 4px; }
.status span { padding: 0 10px; border-right: 1px solid #fff; line-height: 12px; }
.views { margin-left: auto; display: flex; gap: 8px; align-items: center; }

/* taskbar */
.taskbar { display: flex; align-items: center; height: 40px; background: #1d1e21; flex: none; padding-right: 4px; }
.start { width: 48px; display: flex; justify-content: center; }
.tasksearch { width: 344px; height: 40px; background: #333; border: 1px solid #5c5c5c; display: flex; align-items: center; padding-left: 11px; font-size: 15px; }
.tasksearch input::placeholder { color: #ccc; }
.tasksearch input { margin-left: 10px; }
.apps { display: flex; margin-left: 2px; height: 40px; }
.apps button { width: 49px; display: flex; align-items: center; justify-content: center; position: relative; }
.apps button::after { content: ""; position: absolute; bottom: 0; left: 4px; right: 4px; height: 2px; background: #76b9ed; }
.apps .on { background: #4b4c4e; }
.apps .on::after { left: 0; right: 0; }
.weather { margin-left: auto; display: flex; align-items: center; gap: 9px; font-size: 14px; }
.tray { display: flex; gap: 8px; margin: 0 11px 0 15px; }
.tray svg { width: 16px; height: 16px; }
.lang { width: 21px; }
.clock { width: 78px; text-align: center; line-height: 18px; padding-left: 2px; }
.notify { width: 46px; height: 40px; border-right: 1px solid #666; padding: 12px 0 0 9px; position: relative; }
.badge { position: absolute; right: 12px; top: 18px; width: 18px; height: 18px; border: 1px solid #999; border-radius: 9px; background: #2a2b2e; line-height: 16px; }

/* windows over the desktop */
.window { position: absolute; color: #000; background: #f0f0f0; box-shadow: 0 4px 14px rgba(0, 0, 0, 0.4); }
.window header { display: flex; align-items: center; background: #fff; height: 30px; }
.window header button { display: flex; justify-content: center; }
.diskmgmt { left: 1037px; top: 415px; width: 754px; height: 526px; border: 1px solid #3a3a3a; display: flex; flex-direction: column; }
.diskmgmt header { padding: 0 4px 0 7px; gap: 6px; color: #999; flex: none; }
.diskmgmt header h3 { flex: 1; }
.diskmgmt header button { width: 39px; color: #888; }
.menu { display: flex; background: #fff; height: 23px; line-height: 22px; padding-left: 9px; gap: 16px; border-bottom: 1px solid #a0a0a0; flex: none; }
.toolbar { display: flex; align-items: center; background: #fff; height: 23px; gap: 7px; padding-left: 4px; border-bottom: 1px solid #d8d8d8; flex: none; }
.toolbar i { width: 1px; height: 18px; background: #999; }
.volumes { height: 246px; margin: 6px 2px 0 1px; background: #fff; border: 1px solid #696969; border-width: 2px 0 0 1px; flex: none; overflow: hidden; }
table { border-collapse: separate; border-spacing: 0; table-layout: fixed; width: 100%; }
.c1 { width: 129px; } .c2 { width: 76px; } .c3 { width: 68px; } .c4 { width: 86px; } .c5 { width: 77px; }
.c6 { width: 96px; } .c7 { width: 66px; } .c8 { width: 91px; }
th { height: 19px; background: #f0f0f0; border: 1px solid #696969; border-width: 0 1px 1px 0; font-weight: normal; text-align: left; padding: 2px 0 0 6px; white-space: nowrap; }
td { height: 17px; padding: 2px 0 0 6px; white-space: nowrap; line-height: 15px; }
td:first-child { padding-left: 3px; }
td svg { display: inline-block; width: 14px; height: 10px; margin-right: 3px; vertical-align: -1px; }
.picked { background: #f0f0f0; padding-right: 5px; }

.graph { display: flex; height: 145px; margin: 6px 2px 0 1px; border-top: 2px solid #696969; border-left: 1px solid #696969; padding-top: 4px; flex: none; overflow: hidden; }
.disks { flex: 1; }
.disk-row { display: flex; height: 99px; line-height: 15px; }
.disk-info { width: 104px; height: 97px; border-right: 1px solid #808080; border-bottom: 1px solid #a0a0a0; border-top: 1px solid #fff; padding: 8px 0 0 9px; }
.disk-info b { display: flex; align-items: center; gap: 2px; margin-left: 2px; }
.disk-info svg { width: 14px; height: 10px; margin-bottom: 4px; }
.parts { display: grid; width: 597px; height: 97px; padding: 5px 3px 3px 1px; border: 1px solid #a0a0a0; border-left: 0; border-top-color: #fff; gap: 1px; }
.three { grid-template-columns: 113px 1fr 156px; }
.one { width: 438px; grid-template-columns: 1fr; }
.part { display: flex; flex-direction: column; border-right: 1px solid #a0a0a0; border-bottom: 1px solid #a0a0a0; min-width: 0; }
.stripe { height: 14px; background: #000080; border-bottom: 1px solid #808080; flex: none; }
.part p { flex: 1; margin: 2px 2px 3px 3px; background: #fff; border: 1px solid #a0a0a0; padding: 18px 0 0 3px; overflow: hidden; white-space: nowrap; line-height: 15px; }
.one .part p { padding-top: 2px; }
.hatch { background: #c0c0c0; }
.hatch p { background: repeating-linear-gradient(135deg, #fff 0 5px, #999 5px 6px); padding-left: 1px; }
.hatch span { background: #fff; padding-left: 1px; }
.vscroll { width: 17px; display: flex; flex-direction: column; align-items: center; color: #444; }
.vscroll .thumb { width: 16px; height: 44px; background: #cdcdcd; margin: 3px 0 auto; }
.vscroll svg:last-child { margin-bottom: 3px; }
.legend { display: flex; align-items: center; height: 20px; margin: 0 2px 0 1px; padding-left: 5px; border: 1px solid #a0a0a0; border-top-color: #fff; flex: none; }
.legend i { width: 11px; height: 13px; margin-right: 5px; border: 1px solid #999; }
.legend .black { background: #000; }
.legend .navy { background: #000080; margin-left: 5px; }
.wstatus { flex: 1; display: flex; margin-top: 3px; border-top: 1px solid #d0d0d0; padding: 1px 1px 1px 0; }
.wstatus span { width: 133px; border-right: 1px solid #d0d0d0; }
.wstatus span:first-child { flex: 1; }
.wstatus span:last-child { width: 85px; }

.dialog { left: 1224px; width: 380px; border: 1px solid #777; box-shadow: 0 4px 20px rgba(0, 0, 0, 0.5); font-size: 11px; line-height: 13px; }
.dialog header { padding-left: 8px; font-size: 12px; }
.dialog h3 { flex: 1; }
.dialog header button { width: 31px; }
.buttons { display: flex; justify-content: flex-end; gap: 8px; }
.buttons button, .path button { width: 73px; height: 21px; background: #e1e1e1; border: 1px solid #adadad; }
.back { top: 550px; height: 256px; display: flex; flex-direction: column; justify-content: space-between; border-color: #aaa; }
.back header { color: #999; }
.back .buttons { padding: 0 16px 12px 0; gap: 14px; }
.front { top: 583px; height: 190px; border-color: #555; }
.front form { padding: 12px 10px 0 11px; }
.dialog .line { display: flex; align-items: center; }
.letter { height: 21px; margin-top: 5px; color: #838383; }
.letter select { margin-left: auto; width: 45px; height: 21px; background: #ccc; border: 1px solid #bfbfbf; }
.dialog input[type=radio] { width: 13px; height: 13px; margin: 0 3px 0 0; appearance: none; border: 1px solid #333; border-radius: 7px; background: #fff; }
.dialog input[type=radio]:disabled { border-color: #bbb; }
.dialog input[type=radio]:checked { background: radial-gradient(circle, #222 0 3px, #fff 4px); }
.dialog .line + .line { margin-top: 6px; }
.dialog .path { justify-content: flex-end; gap: 8px; }
.path input { width: 257px; height: 23px; border: 1px solid #7a7a7a; background: #fff; }
.front .buttons { margin-top: 24px; }
.front .path, .front .buttons { padding-right: 1px; }
.buttons .default { border: 2px solid #0078d7; }
```
